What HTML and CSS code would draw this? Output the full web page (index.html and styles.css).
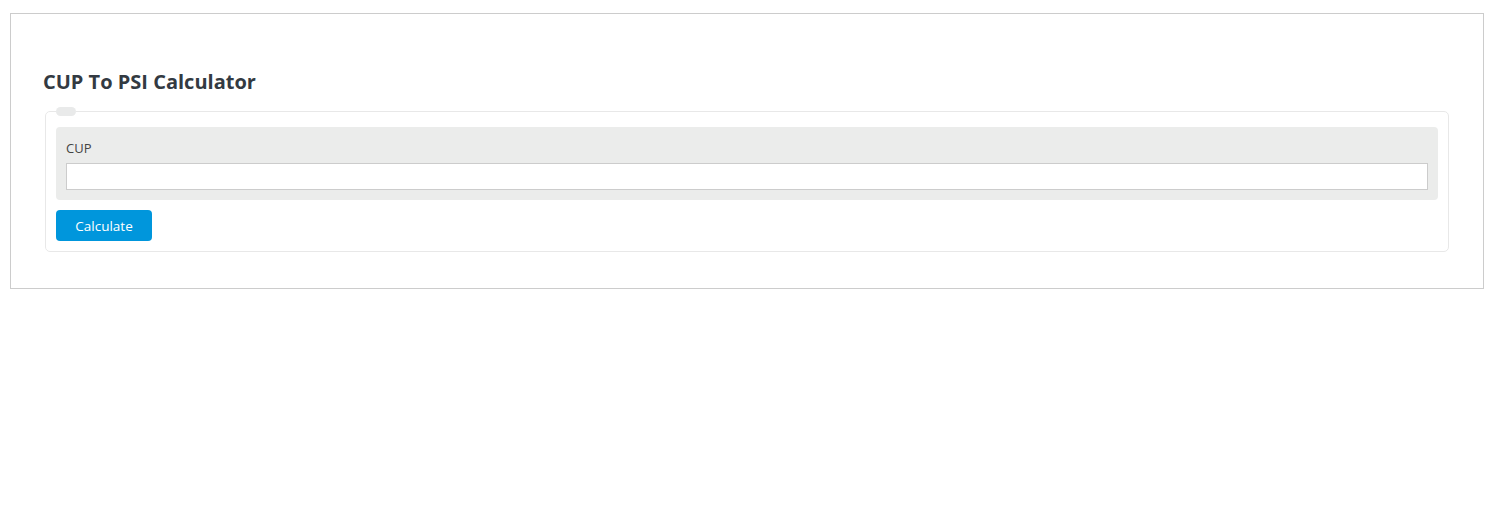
FILE: index.html
```html
<!DOCTYPE html>
<html lang="en">
<head>
    <title>CUP To PSI Calculator</title>
    <link rel="stylesheet" href="styles.css">
</head>
<body>
    <div class="calc-wrap">
        <h2 class="calc-title">CUP To PSI Calculator</h2>
        <form class="calc-form" action="">
            <fieldset class="calc-fieldset">
                <legend class="calc-legend"></legend>
                <div class="calc-row">
                    <label class="calc-label" for="cup">CUP</label>
                    <input class="calc-input" type="text" id="cup">
                </div>
                <button type="button" class="calc-btn">Calculate</button>
            </fieldset>
        </form>
    </div>
</body>
</html>
```

FILE: styles.css
```css
body {
    font-family: 'Open Sans', 'Noto Sans', Arial, sans-serif;
    background: #fff;
    margin: 0;
    padding: 0;
}
.calc-wrap {
    margin: 13px 11px 0 10px;
    border: 1px solid #cccccc;
    padding: 55px 34px 36px 34px;
}
.calc-title {
    margin: 0 0 12px -2px;
    font-size: 20px;
    font-weight: bold;
    color: #333a42;
    line-height: 26px;
}
.calc-form {
    margin: 0;
}
.calc-fieldset {
    margin: 0;
    border: 1px solid #e8e8e8;
    border-radius: 5px;
    padding: 11px 10px 10px 10px;
}
.calc-legend {
    width: 20px;
    height: 9px;
    padding: 0;
    margin: 0;
    background: #e9eaea;
    border-radius: 5px;
}
.calc-row {
    background: #ebeceb;
    border-radius: 4px;
    padding: 11px 10px 10px 10px;
}
.calc-label {
    display: block;
    font-size: 13px;
    color: #444;
    line-height: 20px;
    margin-bottom: 5px;
}
.calc-input {
    display: block;
    box-sizing: border-box;
    width: 100%;
    height: 27px;
    border: 1px solid #cccccc;
    background: #fff;
    margin: 0;
}
.calc-btn {
    margin-top: 10px;
    width: 96px;
    height: 31px;
    background: #0096dc;
    color: #fff;
    border: none;
    border-radius: 4px;
    font-family: inherit;
    font-size: 13.5px;
    cursor: pointer;
}
```
